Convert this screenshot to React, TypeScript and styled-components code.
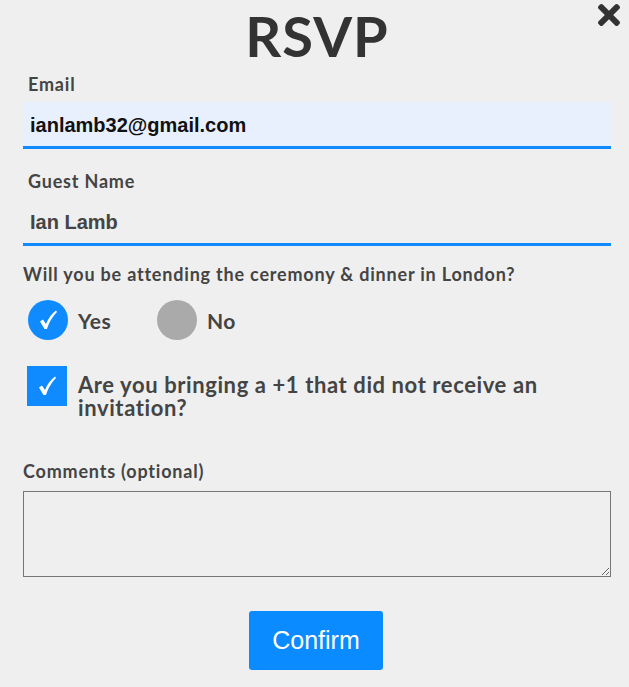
import styled, { createGlobalStyle } from 'styled-components';
import { FaTimes } from 'react-icons/fa';

const GlobalStyle = createGlobalStyle`
  html, body {
    margin: 0;
    padding: 0;
    background: #efefef;
  }
  * {
    box-sizing: border-box;
  }
`;

const Modal = styled.div`
  position: relative;
  width: 629px;
  min-height: 687px;
  padding: 0 18px 0 23px;
  font-family: Lato, 'Noto Sans', sans-serif;
  color: #3d3d3d;
`;

const Title = styled.h1`
  margin: 0;
  padding-top: 2px;
  height: 72px;
  text-align: center;
  font-size: 56px;
  line-height: 68px;
  font-weight: 700;
  color: #333;
  letter-spacing: 1px;
`;

const CloseButton = styled.button`
  position: absolute;
  top: -1px;
  right: 4px;
  border: 0;
  padding: 0;
  background: none;
  color: #333;
  font-size: 32px;
  line-height: 0;
  cursor: pointer;
`;

const Field = styled.div<{ $gap?: number }>`
  display: flex;
  flex-direction: column;
  margin-top: ${(p) => p.$gap ?? 0}px;
`;

const FieldLabel = styled.label<{ $indent?: boolean }>`
  display: block;
  padding-left: ${(p) => (p.$indent ? '5px' : '0')};
  font-size: 18px;
  line-height: 24px;
  font-weight: 700;
  letter-spacing: 0.8px;
  color: #444;
`;

const TextInput = styled.input<{ $filled?: boolean }>`
  width: 100%;
  height: 47px;
  margin-top: 6px;
  padding: 2px 7px 0;
  border: 0;
  border-bottom: 3px solid #0f8bff;
  border-radius: 0;
  outline: none;
  background: ${(p) => (p.$filled ? '#e8f0fe' : 'transparent')};
  font-family: 'Liberation Sans', Arial, sans-serif;
  font-weight: 700;
  font-size: 20px;
  color: ${(p) => (p.$filled ? '#111' : '#444')};
`;

const Question = styled.div`
  margin-top: 17px;
  font-size: 18px;
  line-height: 22px;
  font-weight: 700;
  letter-spacing: 0.8px;
  color: #444;
`;

const RadioRow = styled.div`
  display: flex;
  align-items: center;
  margin-top: 15px;
  padding-left: 5px;
`;

const RadioOption = styled.label`
  display: flex;
  align-items: center;
  gap: 10px;
  width: 129px;
  font-size: 21px;
  font-weight: 700;
  letter-spacing: 0.5px;
  color: #444;
`;

const Circle = styled.span<{ $checked?: boolean }>`
  display: flex;
  align-items: center;
  justify-content: center;
  width: 40px;
  height: 40px;
  border-radius: 50%;
  background: ${(p) => (p.$checked ? '#0f8bff' : '#aaaaaa')};
`;

const CheckRow = styled.label`
  display: flex;
  align-items: flex-start;
  gap: 11px;
  margin-top: 26px;
  padding-left: 4px;
`;

const Box = styled.span`
  flex: none;
  display: flex;
  align-items: center;
  justify-content: center;
  width: 40px;
  height: 40px;
  background: #0f8bff;
`;

const CheckText = styled.span`
  padding-top: 7px;
  font-size: 22px;
  line-height: 23px;
  font-weight: 700;
  letter-spacing: 0.6px;
  color: #444;
`;

const CommentsBox = styled.textarea`
  width: 588px;
  height: 86px;
  margin-top: 8px;
  border: 1px solid #767676;
  background: transparent;
  resize: vertical;
  font-family: 'Liberation Sans', Arial, sans-serif;
`;

const Footer = styled.div`
  display: flex;
  justify-content: center;
  margin-top: 34px;
  padding-right: 2px;
`;

const ConfirmButton = styled.button`
  width: 134px;
  height: 59px;
  border: 0;
  border-radius: 3px;
  background: #0a8bff;
  color: #fff;
  font-family: 'Liberation Sans', Arial, sans-serif;
  font-size: 25px;
  cursor: pointer;
`;

const Check = () => (
  <svg width="22" height="22" viewBox="0 0 22 22">
    <path
      d="M3 12.5 L6 10.5 L9 15 C11.5 9 14.5 5 19 1.5 L20 3 C15.5 7.5 12.5 12.5 10 20 L7.5 20 Z"
      fill="#fff"
    />
  </svg>
);

export default function App() {
  return (
    <>
      <GlobalStyle />
      <Modal>
        <Title>RSVP</Title>
        <CloseButton aria-label="Close">
          <FaTimes />
        </CloseButton>

        <Field>
          <FieldLabel $indent>Email</FieldLabel>
          <TextInput $filled defaultValue="ianlamb32@gmail.com" />
        </Field>

        <Field $gap={20}>
          <FieldLabel $indent>Guest Name</FieldLabel>
          <TextInput defaultValue="Ian Lamb" />
        </Field>

        <Question>Will you be attending the ceremony &amp; dinner in London?</Question>
        <RadioRow>
          <RadioOption>
            <Circle $checked>
              <Check />
            </Circle>
            Yes
          </RadioOption>
          <RadioOption>
            <Circle />
            No
          </RadioOption>
        </RadioRow>

        <CheckRow>
          <Box>
            <Check />
          </Box>
          <CheckText>Are you bringing a +1 that did not receive an invitation?</CheckText>
        </CheckRow>

        <Field $gap={40}>
          <FieldLabel>Comments (optional)</FieldLabel>
          <CommentsBox />
        </Field>

        <Footer>
          <ConfirmButton>Confirm</ConfirmButton>
        </Footer>
      </Modal>
    </>
  );
}
